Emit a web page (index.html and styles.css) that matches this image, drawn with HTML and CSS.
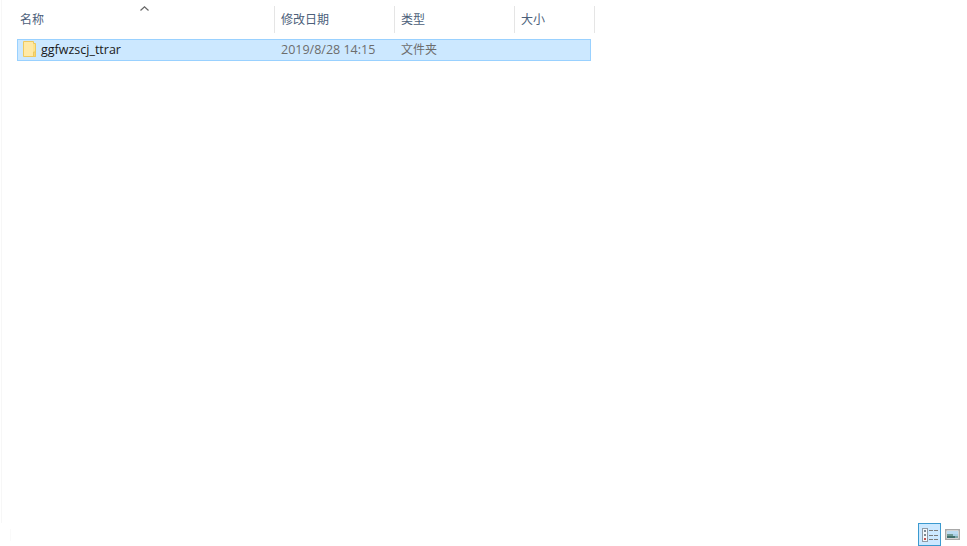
FILE: index.html
```html
<!DOCTYPE html>
<html>
<head>
    <title>ggfwzscj_ttrar</title>
    <link rel="stylesheet" href="styles.css">
</head>
<body>
    <div class="explorer">
        <div class="file-pane">
            <!-- Column headers -->
            <div class="file-header">
                <div class="col col-name">
                    名称
                    <svg class="sort-arrow" width="9" height="5" viewBox="0 0 9 5">
                        <path d="M0.500 4.500L4.500 0.800l4 3.700" fill="none" stroke="#666" stroke-width="1.200"/>
                    </svg>
                </div>
                <div class="col col-date">修改日期</div>
                <div class="col col-type">类型</div>
                <div class="col col-size">大小</div>
            </div>

            <!-- Selected folder row -->
            <div class="file-row">
                <div class="cell cell-name">
                    <svg class="folder-icon" width="14" height="16" viewBox="0 0 14 16">
                        <path d="M0.500 0.500h10v2h2v13h-12z" fill="#fde38e" stroke="#efc95f" stroke-width="1"/>
                        <path d="M1 1h9v14h-9z" fill="#ffe9a6"/>
                        <path d="M10.500 11v4.500h2v-4.500z" fill="#f8d775" stroke="#efc95f" stroke-width="1"/>
                    </svg>
                    <span class="file-title">ggfwzscj_ttrar</span>
                </div>
                <div class="cell cell-date">2019/8/28 14:15</div>
                <div class="cell cell-type">文件夹</div>
            </div>
        </div>

        <!-- View switch at bottom right -->
        <div class="status-bar">
            <div class="status-edge"></div>
            <div class="view-btn active">
                <svg width="21" height="21" viewBox="0 0 21 21">
                    <rect x="3.500" y="4.500" width="5" height="13" fill="#f4f7fa" stroke="#8f9aa5"/>
                    <rect x="5" y="6" width="2" height="2" fill="#7d8a96"/>
                    <rect x="5" y="10" width="2" height="2" fill="#7d8a96"/>
                    <rect x="5" y="14" width="2" height="2" fill="#c0504d"/>
                    <path d="M10 6.500h4M15 6.500h4M10 11.500h4M15 11.500h4M10 15.500h4M15 15.500h4" stroke="#7b7b7b" stroke-width="1"/>
                </svg>
            </div>
            <div class="view-btn">
                <svg width="15" height="11" viewBox="0 0 15 11">
                    <rect x="0" y="0" width="15" height="11" fill="#a8a8a8"/>
                    <rect x="1.500" y="1.500" width="12" height="8" fill="#fff"/>
                    <rect x="2" y="2" width="11" height="3" fill="#bcdcf2"/>
                    <rect x="2" y="5" width="6" height="2" fill="#6f9a94"/>
                    <rect x="8" y="5" width="5" height="2" fill="#a9cfe6"/>
                    <rect x="2" y="7" width="8" height="2" fill="#3f6f6c"/>
                    <rect x="10" y="7" width="3" height="2" fill="#7fa7a8"/>
                </svg>
            </div>
        </div>
    </div>
</body>
</html>
```

FILE: styles.css
```css
html, body {
    margin: 0;
    padding: 0;
    height: 100%;
    background-color: #fff;
}
body {
    font-family: "Open Sans", "Noto Sans CJK SC", sans-serif;
    font-size: 12px;
    overflow: hidden;
}
.explorer {
    display: flex;
    flex-direction: column;
    height: 546px;
}
.file-pane {
    flex: 1;
    margin-left: 1px;
    padding-top: 6px;
    padding-left: 15px;
    border-left: 1px solid #f7f7f7;
}
.file-header {
    display: flex;
    height: 27px;
}
.col {
    position: relative;
    box-sizing: border-box;
    padding-left: 6px;
    line-height: 27px;
    color: #4c607a;
    border-right: 1px solid #e5e5e5;
}
.col-name {
    width: 258px;
    padding-left: 3px;
}
.col-date,
.col-type {
    width: 120px;
}
.col-size {
    width: 80px;
}
.sort-arrow {
    position: absolute;
    left: 123px;
    top: 0;
}
.file-row {
    display: flex;
    box-sizing: border-box;
    width: 574px;
    height: 22px;
    margin-top: 6px;
    background-color: #cce8ff;
    border: 1px solid #99d1ff;
}
.cell {
    box-sizing: border-box;
    line-height: 20px;
    color: #6d6d6d;
    padding-left: 6px;
    width: 120px;
}
.cell-name {
    display: flex;
    align-items: center;
    width: 257px;
    padding-left: 5px;
    color: #1a1a1a;
    font-size: 12.500px;
}
.cell-date {
    font-size: 12.500px;
}
.folder-icon {
    flex: none;
    margin-right: 4px;
    margin-bottom: 2px;
}
.status-bar {
    display: flex;
    align-items: center;
    gap: 3px;
    height: 23px;
    padding-right: 7px;
}
.status-edge {
    width: 1px;
    height: 12px;
    margin-left: 10px;
    margin-right: auto;
    background-color: #fafafa;
}
.view-btn {
    display: flex;
    align-items: center;
    justify-content: center;
    box-sizing: border-box;
    width: 16px;
    height: 23px;
}
.view-btn.active {
    width: 23px;
    background-color: #cce8ff;
    border: 1px solid #3b9ad0;
}
```
